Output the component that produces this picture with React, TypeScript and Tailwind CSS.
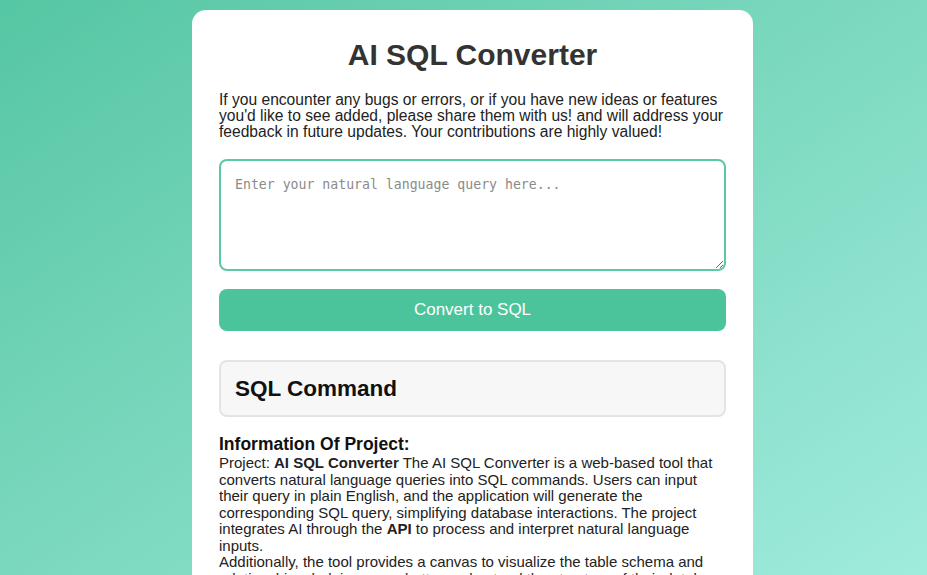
import React from "react";

export default function App(): React.ReactElement {
  return (
    <div className="min-h-screen w-full flex justify-center pl-[18px] pt-[10px] bg-linear-to-br from-[#55c6a3] to-[#a2eddf] font-['Liberation_Sans',Arial,sans-serif]">
      <div className="w-[561px] h-fit bg-white rounded-[14px] px-[27px] pt-[28px] pb-8">
        <h1 className="text-[30px] leading-[34px] font-bold text-center text-[#333]">AI SQL Converter</h1>
        <p className="mt-[20px] text-[15.6px] leading-[16px] text-[#222] whitespace-nowrap">
          If you encounter any bugs or errors, or if you have new ideas or features
          <br />
          you'd like to see added, please share them with us! and will address your
          <br />
          feedback in future updates. Your contributions are highly valued!
        </p>
        <textarea
          className="mt-[19px] block w-full h-[112px] border-2 border-[#5cc8a4] rounded-[8px] p-[14px] text-[13.2px] font-['DejaVu_Sans_Mono',monospace] placeholder:text-[#8a8a8a] outline-none"
          placeholder="Enter your natural language query here..."
        />
        <button className="mt-[18px] w-full h-[42px] bg-[#4cc49b] text-white text-[17px] rounded-[8px]">
          Convert to SQL
        </button>
        <div className="mt-[29px] h-[57px] flex items-center bg-[#f7f7f7] border-2 border-[#e4e4e4] rounded-[8px] px-[14px]">
          <h2 className="text-[22.5px] font-bold text-[#111]">SQL Command</h2>
        </div>
        <div className="mt-[17px] text-[#222]">
          <h3 className="text-[17.5px] leading-[20px] font-bold text-[#111]">Information Of Project:</h3>
          <p className="mt-[1px] text-[15px] leading-[16.5px] whitespace-nowrap">
            Project: <strong>AI SQL Converter</strong> The AI SQL Converter is a web-based tool that
            <br />
            converts natural language queries into SQL commands. Users can input
            <br />
            their query in plain English, and the application will generate the
            <br />
            corresponding SQL query, simplifying database interactions. The project
            <br />
            integrates AI through the <strong>API</strong> to process and interpret natural language
            <br />
            inputs.
          </p>
          <p className="text-[15px] leading-[16.5px] whitespace-nowrap">
            Additionally, the tool provides a canvas to visualize the table schema and
            <br />
            relationships, helping users better understand the structure of their database.
          </p>
        </div>
      </div>
    </div>
  );
}
